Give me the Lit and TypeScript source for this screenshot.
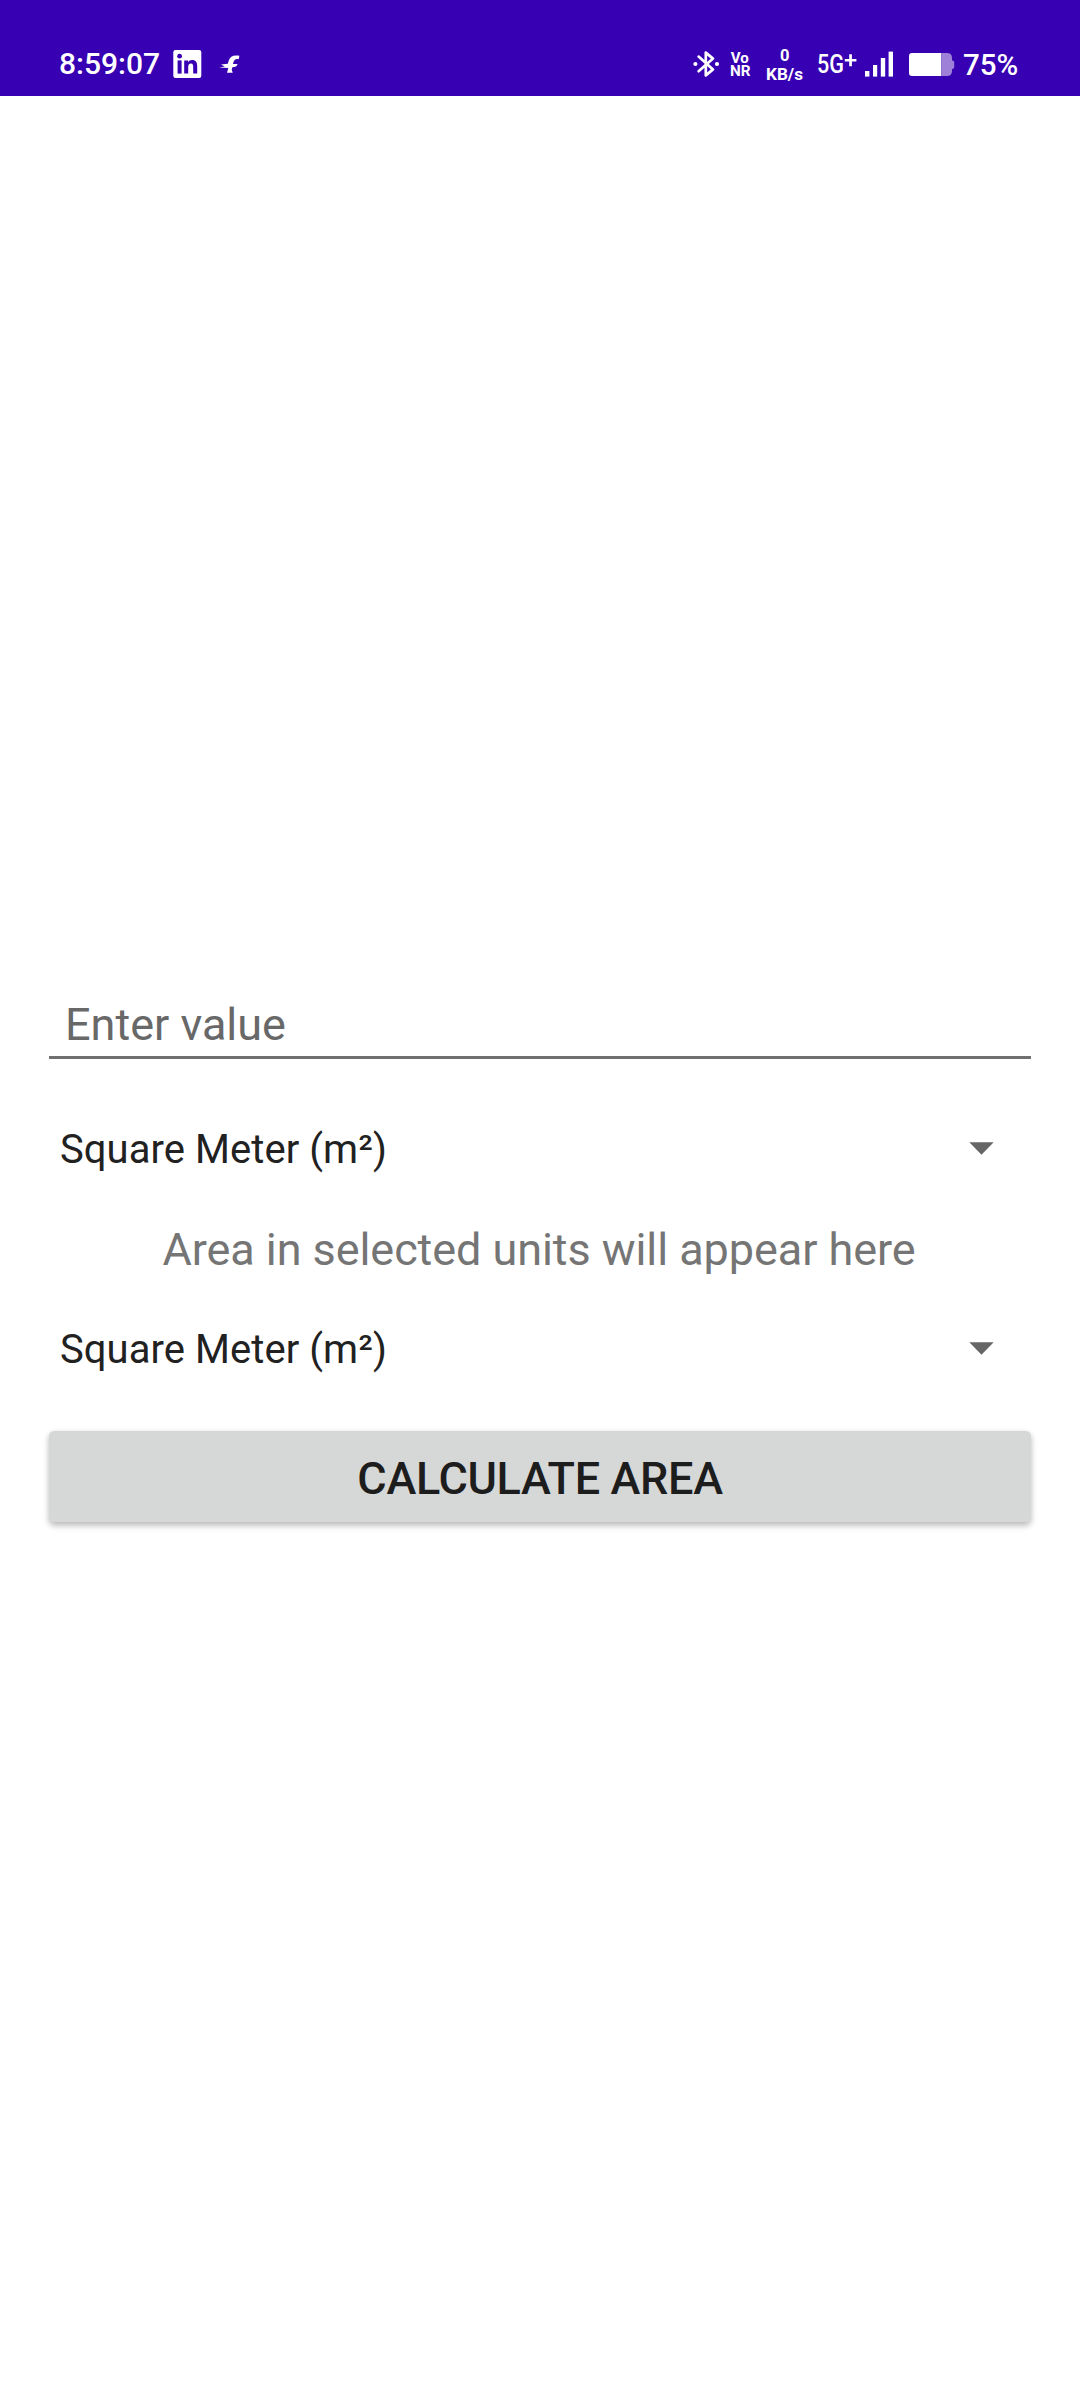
import { LitElement, html, css } from "lit";
import { customElement, property } from "lit/decorators.js";

@customElement("status-bar")
class StatusBar extends LitElement {
  static styles = css`
    :host { display: block; }
    .bar {
      box-sizing: border-box;
      height: 96px;
      padding: 44px 59px 0 59px;
      display: flex;
      justify-content: space-between;
      background: #3700b3;
      color: #fff;
      font-family: Roboto, sans-serif;
      font-weight: 500;
    }
    .side { display: flex; align-items: flex-start; height: 40px; }
    .clock { width: 114px; font-size: 30px; line-height: 40px; white-space: nowrap; }
    .percent { width: 58px; font-size: 29.5px; line-height: 43px; white-space: nowrap; }
    svg { display: block; fill: #fff; flex: none; font-family: Roboto, sans-serif; }
    .line { fill: none; stroke: #fff; stroke-width: 2.7; stroke-linejoin: round; stroke-linecap: round; }
    .cut { fill: #3700b3; }
    .faded { fill: #9f80d9; }
    .bold { font-weight: 700; }
    .medium { font-weight: 500; }
    .regular { font-weight: 400; }
  `;

  render() {
    return html`
      <div class="bar">
        <div class="side">
          <span class="clock">8:59:07</span>
          <svg width="40" height="40" viewBox="0 0 40 40">
            <rect x="0.3" y="6" width="28" height="28" rx="2.2" />
            <rect class="cut" x="4.6" y="16.4" width="4" height="13.2" />
            <circle class="cut" cx="6.6" cy="12.2" r="2.4" />
            <path class="cut" d="M11.2 16.4H15V18.2C15.8 16.9 17.3 16.1 19.1 16.1C23 16.1 24.2 18.6 24.2 22.2V29.6H20.2V23C20.2 21 19.8 19.6 18 19.6C16 19.6 15.2 21 15.2 23V29.6H11.2Z" />
          </svg>
          <svg width="36" height="40" viewBox="213 44 36 40">
            <path d="M239.4 55.8L238.7 59.2C236 58.6 234.4 59.3 233.5 62L233 64H237.6C236.8 66.4 235.6 67.2 232.4 67.2L231.7 69.4L232.7 72.8H227L228.3 68.1L219 67.4L224.8 66.5L221 64.4L227.8 63.8L228.7 60.8C230 56.2 233.8 54.6 239.4 55.8Z" />
          </svg>
        </div>
        <div class="side">
          <svg width="34" height="40" viewBox="690 44 34 40">
            <path class="line" d="M698.6 56.6L713 69.4L705.8 75.4V52.6L713 58.6L698.6 71.2" />
            <circle cx="695.4" cy="64" r="2.1" />
            <circle cx="717" cy="64" r="2.1" />
          </svg>
          <svg width="36" height="40" viewBox="724 44 36 40">
            <text class="bold" x="730.8" y="63" font-size="14" textLength="18" lengthAdjust="spacingAndGlyphs">Vo</text>
            <text class="bold" x="730" y="75.8" font-size="15.5" textLength="20.5" lengthAdjust="spacingAndGlyphs">NR</text>
          </svg>
          <svg width="50" height="40" viewBox="760 44 50 40">
            <text class="bold" x="780" y="61.3" font-size="17" textLength="9.5" lengthAdjust="spacingAndGlyphs">0</text>
            <text class="bold" x="766" y="80.4" font-size="17" textLength="37" lengthAdjust="spacingAndGlyphs">KB/s</text>
          </svg>
          <svg width="52" height="40" viewBox="810 44 52 40">
            <text class="medium" x="817" y="73.4" font-size="26" textLength="27" lengthAdjust="spacingAndGlyphs">5G</text>
            <path d="M849.2 54.2H851.9V58.9H856.4V61.5H851.9V66.2H849.2V61.5H844.8V58.9H849.2Z" />
          </svg>
          <svg width="36" height="40" viewBox="862 44 36 40">
            <rect x="865" y="71" width="4.4" height="5.6" />
            <rect x="873" y="65" width="4.2" height="11.6" />
            <rect x="880.8" y="58" width="4.4" height="18.6" />
            <rect x="888.6" y="51.6" width="4.4" height="25" />
          </svg>
          <svg width="65" height="40" viewBox="898 44 65 40">
            <path d="M941.3 53H912Q909 53 909 56V73Q909 76 912 76H941.3Z" />
            <path class="faded" d="M941.3 53H947Q952 53 952 58V60.2L954.2 61.4V68L952 69.2V71Q952 76 947 76H941.3Z" />
          </svg>
          <span class="percent">75%</span>
        </div>
      </div>
    `;
  }
}

@customElement("unit-picker")
class UnitPicker extends LitElement {
  @property() label = "";

  static styles = css`
    :host { display: block; }
    .row {
      display: flex;
      justify-content: space-between;
      height: 60px;
      padding: 0 37px 0 11px;
      font-size: 40px;
      line-height: 62px;
      letter-spacing: 0.06px;
      color: #212121;
    }
    .arrow { display: block; margin-top: 23px; fill: #666; }
  `;

  render() {
    return html`
      <div class="row">
        <span>${this.label}</span>
        <svg class="arrow" width="25" height="13" viewBox="0 0 25 13">
          <path d="M0.3 0.3H24.7L12.5 12.7Z" />
        </svg>
      </div>
    `;
  }
}

@customElement("app-root")
class AppRoot extends LitElement {
  static styles = css`
    :host {
      display: block;
      min-height: 2408px;
      background: #fff;
      font-family: Roboto, sans-serif;
    }
    .form {
      display: flex;
      flex-direction: column;
      padding: 902px 49px 0;
    }
    .field {
      box-sizing: border-box;
      display: block;
      width: 100%;
      height: 61px;
      margin: 0 0 60px;
      padding: 0 16px 6px;
      border: 0;
      border-bottom: 3px solid #707070;
      border-radius: 0;
      outline: none;
      background: none;
      font: 400 45px/52px Roboto, sans-serif;
    }
    .field::placeholder { color: #686868; opacity: 1; }
    .result {
      margin: 41px 0 39px;
      padding-right: 2px;
      font-size: 45px;
      line-height: 60px;
      letter-spacing: -0.07px;
      text-align: center;
      color: #757575;
      white-space: nowrap;
    }
    .action {
      height: 91px;
      margin: 52px 0 0;
      padding: 4px 0 0;
      box-sizing: border-box;
      border: 0;
      border-radius: 5px;
      background: #d6d8d7;
      color: #1d1d1d;
      font: 500 45px/87px Roboto, sans-serif;
      letter-spacing: -0.35px;
      box-shadow: 0 4px 6px rgba(0, 0, 0, 0.22), 0 1px 6px rgba(0, 0, 0, 0.08);
    }
  `;

  render() {
    return html`
      <status-bar></status-bar>
      <main class="form">
        <input class="field" placeholder="Enter value" />
        <unit-picker label="Square Meter (m²)"></unit-picker>
        <div class="result">Area in selected units will appear here</div>
        <unit-picker label="Square Meter (m²)"></unit-picker>
        <button class="action">CALCULATE AREA</button>
      </main>
    `;
  }
}
